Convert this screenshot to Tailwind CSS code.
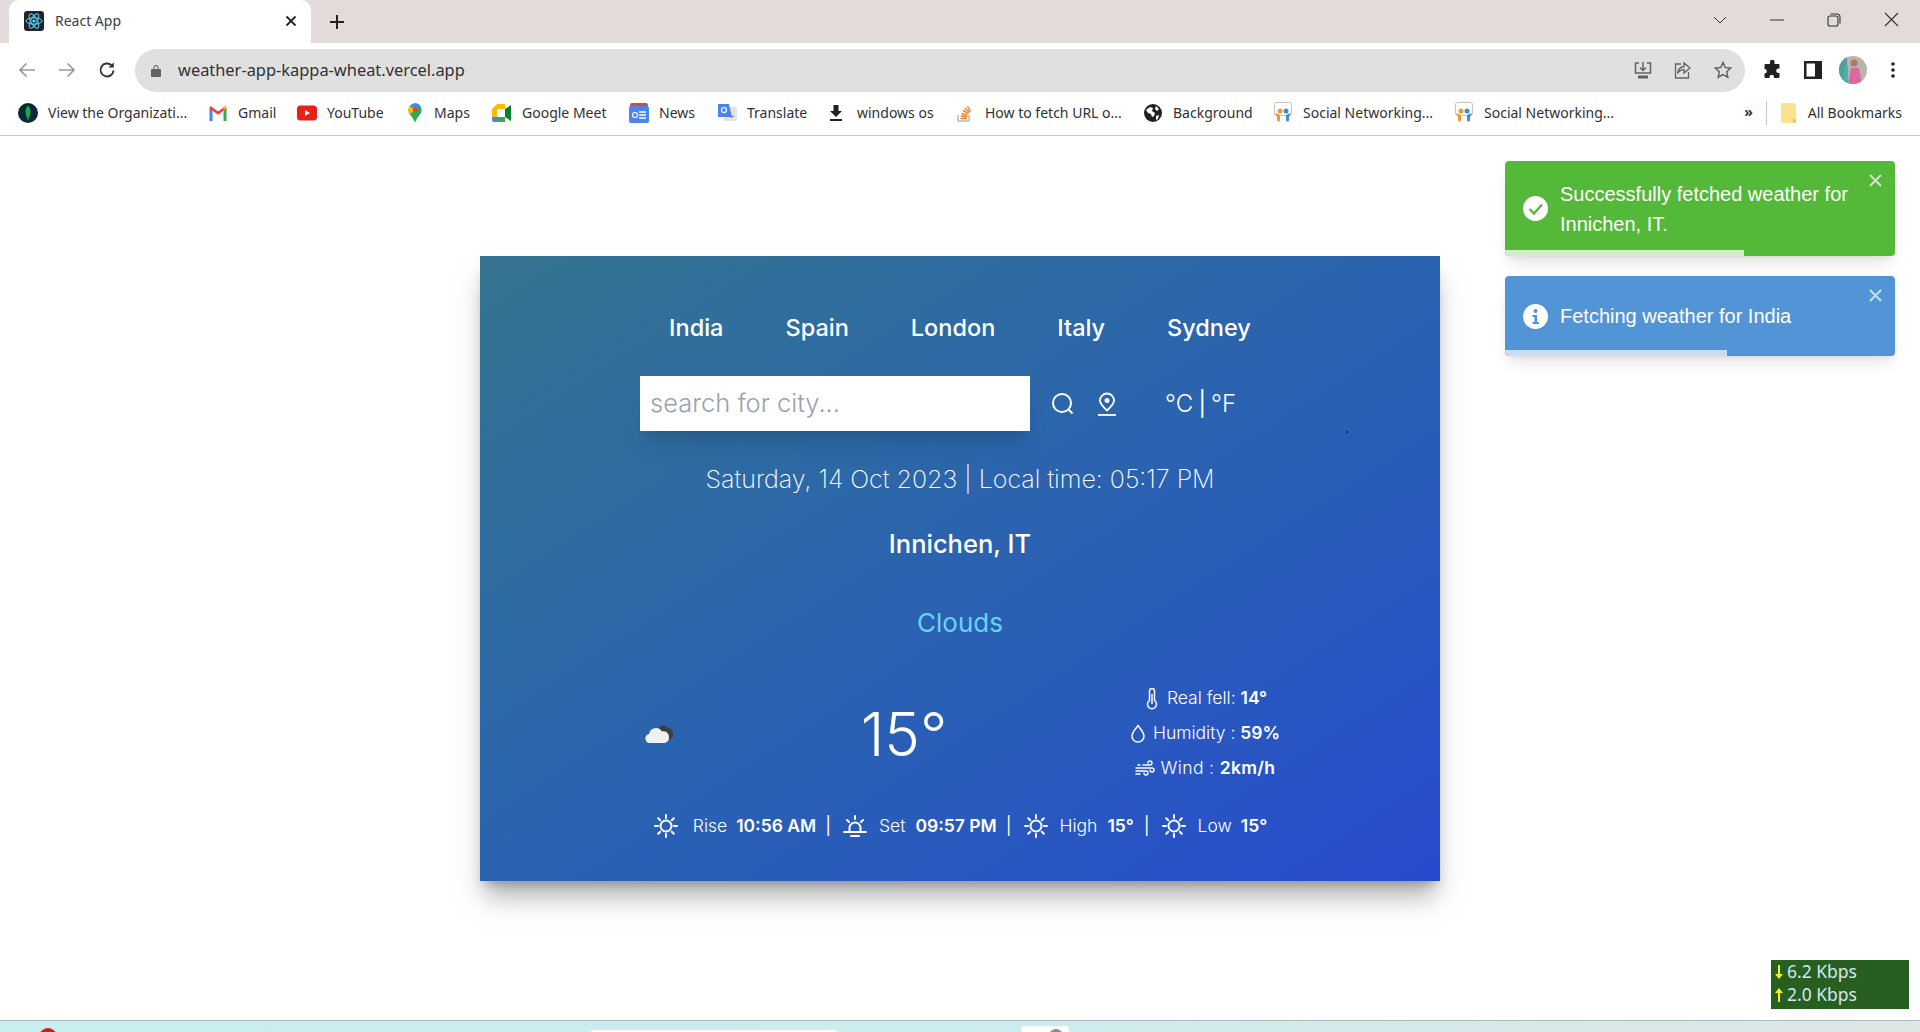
<!DOCTYPE html>
<html>

<head>
    <title>React App</title>
    <script src="https://cdn.jsdelivr.net/npm/@tailwindcss/browser@4"></script>
</head>

<body class="bg-white">
    <div class="h-screen overflow-hidden flex flex-col relative font-['Noto_Sans',sans-serif] text-[#3c4043]">

        <!-- Tab strip -->
        <div class="h-[43px] shrink-0 bg-[#e3dbd9] flex items-end">
            <div class="ml-[9px] w-[302px] h-[43px] bg-white rounded-t-[10px] flex items-center pl-[15px] pr-[14px] pb-[2px]">
                <svg class="w-[20px] h-[20px] shrink-0" viewBox="0 0 20 20">
                    <rect width="20" height="20" rx="3" fill="#20232a" />
                    <g fill="none" stroke="#61dafb" stroke-width="1">
                        <ellipse cx="10" cy="10" rx="8" ry="3.2" />
                        <ellipse cx="10" cy="10" rx="8" ry="3.2" transform="rotate(60 10 10)" />
                        <ellipse cx="10" cy="10" rx="8" ry="3.2" transform="rotate(120 10 10)" />
                    </g>
                    <circle cx="10" cy="10" r="1.6" fill="#61dafb" />
                </svg>
                <span class="ml-[11px] text-[14px] flex-1">React App</span>
                <svg class="w-[12px] h-[12px]" viewBox="0 0 12 12" fill="none" stroke="#222" stroke-width="1.8">
                    <path d="M1.5 1.5l9 9M10.5 1.5l-9 9" />
                </svg>
            </div>
            <svg class="w-[16px] h-[16px] ml-[18px] mb-[13px]" viewBox="0 0 16 16" fill="none" stroke="#222" stroke-width="2">
                <path d="M8 1v14M1 8h14" />
            </svg>
            <div class="ml-auto h-[43px] flex items-center text-[#333]">
                <svg class="w-[14px] h-[8px] mb-[4px]" viewBox="0 0 14 8" fill="none" stroke="currentColor" stroke-width="1">
                    <path d="M1 1l6 6 6-6" />
                </svg>
                <svg class="w-[14px] h-[2px] ml-[43px] mb-[4px]" viewBox="0 0 14 2">
                    <path d="M0 1h14" stroke="currentColor" stroke-width="1" />
                </svg>
                <svg class="w-[14px] h-[14px] ml-[43px] mb-[4px]" viewBox="0 0 14 14" fill="none" stroke="currentColor" stroke-width="1.1">
                    <rect x="1" y="3" width="10" height="10" rx="2" />
                    <path d="M3.5 1h6.5a3 3 0 0 1 3 3v6.500" />
                </svg>
                <svg class="w-[15px] h-[15px] ml-[43px] mr-[21px] mb-[4px]" viewBox="0 0 15 15" fill="none" stroke="currentColor" stroke-width="1.1">
                    <path d="M1 1l13 13M14 1L1 14" />
                </svg>
            </div>
        </div>

        <!-- Toolbar -->
        <div class="h-[54px] shrink-0 flex items-center">
            <svg class="w-[18px] h-[16px] ml-[18px]" viewBox="0 0 18 16" fill="none" stroke="#9a9a9a" stroke-width="1.7">
                <path d="M17 8H2M8.5 1.5L2 8l6.500 6.500" />
            </svg>
            <svg class="w-[18px] h-[16px] ml-[22px]" viewBox="0 0 18 16" fill="none" stroke="#9a9a9a" stroke-width="1.7">
                <path d="M1 8h15M9.500 1.500L16 8l-6.500 6.500" />
            </svg>
            <svg class="w-[18px] h-[18px] ml-[22px]" viewBox="0 0 18 18" fill="none" stroke="#333" stroke-width="1.900">
                <path d="M15.500 9.500a6.500 6.500 0 1 1-1.900-5.100" />
                <path d="M15.800 1.200v5.300h-5.300z" fill="#333" stroke="none" />
            </svg>
            <div class="ml-[19px] w-[1610px] h-[43px] bg-[#e0e0e0] rounded-full flex items-center pl-[16px] pr-[12px]">
                <svg class="w-[10px] h-[13px]" viewBox="0 0 10 13" fill="#5f6368">
                    <path d="M2.500 5V3.500a2.500 2.500 0 0 1 5 0V5H9a1 1 0 0 1 1 1v6a1 1 0 0 1-1 1H1a1 1 0 0 1-1-1V6a1 1 0 0 1 1-1zm1 0h3V3.500a1.500 1.500 0 0 0-3 0z" />
                </svg>
                <span class="ml-[17px] text-[16.4px] text-[#303134] flex-1">weather-app-kappa-wheat.vercel.app</span>
                <svg class="w-[20px] h-[20px]" viewBox="0 0 20 20" fill="none" stroke="#5f6368" stroke-width="1.500">
                    <path d="M6 3H2.500v10h15V3H14M10 2v8M7 7.500l3 3 3-3" />
                    <path d="M5 17h10" stroke-width="3" />
                </svg>
                <svg class="w-[20px] h-[20px] ml-[20px]" viewBox="0 0 20 20" fill="none" stroke="#5f6368" stroke-width="1.300">
                    <path d="M8 4H2.500v14h13v-6M11 3v3.500c-4 .5-6 3-6.500 7 2-3 4-3.800 6.500-3.800V13l6-5z" />
                </svg>
                <svg class="w-[20px] h-[20px] ml-[20px]" viewBox="0 0 20 20" fill="none" stroke="#5f6368" stroke-width="1.500">
                    <path d="M10 2.500l2.300 5 5.400.6-4 3.700 1.100 5.400L10 14.500l-4.800 2.700 1.100-5.400-4-3.700 5.400-.6z" />
                </svg>
            </div>
            <svg class="w-[20px] h-[20px] ml-[17px]" viewBox="0 0 20 20" fill="#202124">
                <path d="M8 1.500a2.300 2.300 0 0 1 4.500 0V4h4a1 1 0 0 1 1 1v3.500h-1.500a2.300 2.300 0 0 0 0 4.500h1.500v4a1 1 0 0 1-1 1H12v-1.500a2.300 2.300 0 0 0-4.500 0V18H3.500a1 1 0 0 1-1-1v-3.500H3a2.300 2.300 0 0 0 0-4.500h-.5V5a1 1 0 0 1 1-1H8z" />
            </svg>
            <svg class="w-[18px] h-[18px] ml-[22px]" viewBox="0 0 18 18" fill="none">
                <rect x="1.250" y="1.250" width="15.500" height="15.500" stroke="#202124" stroke-width="2.500" />
                <rect x="11" y="1" width="6" height="16" fill="#202124" />
            </svg>
            <svg class="w-[28px] h-[28px] ml-[17px]" viewBox="0 0 28 28">
                <defs>
                    <clipPath id="avatar"><circle cx="14" cy="14" r="14" /></clipPath>
                </defs>
                <g clip-path="url(#avatar)">
                    <rect width="28" height="28" fill="#bdb3ad" />
                    <rect x="0" width="8" height="28" fill="#5a9a98" />
                    <path d="M9 28l3-16h8l3 16z" fill="#d96aa0" />
                    <circle cx="15" cy="7" r="3.500" fill="#a87b68" />
                    <rect x="5" y="10" width="4" height="18" fill="#3bb8b0" />
                </g>
            </svg>
            <svg class="w-[4px] h-[16px] ml-[24px]" viewBox="0 0 4 16" fill="#202124">
                <circle cx="2" cy="2" r="1.800" />
                <circle cx="2" cy="8" r="1.800" />
                <circle cx="2" cy="14" r="1.800" />
            </svg>
        </div>

        <!-- Bookmarks bar -->
        <div class="h-[39px] shrink-0 border-b border-[#c8c8c8] flex items-center pl-[18px] pr-[18px] pb-[7px] text-[14px] text-[#303134]">
            <div class="flex items-center gap-[10px] w-[190px]">
                <svg class="w-[20px] h-[20px] shrink-0" viewBox="0 0 20 20">
                    <circle cx="10" cy="10" r="10" fill="#0b2a33" />
                    <path d="M10 2.500c3 3 3.500 7.500 0 15-3.500-7.500-3-12 0-15z" fill="#13aa52" />
                </svg>
                <span>View the Organizati...</span>
            </div>
            <div class="flex items-center gap-[10px] w-[89px]">
                <svg class="w-[20px] h-[16px] shrink-0" viewBox="0 0 20 16">
                    <path d="M1.500 16V3l3 2v11z" fill="#4285f4" />
                    <path d="M15.500 16V5l3-2v13z" fill="#34a853" />
                    <path d="M1.500 3.500l8.500 6.300 8.500-6.300-1-2.500-7.500 5.500L2.500 1z" fill="#ea4335" />
                    <path d="M15.500 5.500l3-2.500-1-2-2 1.500z" fill="#fbbc04" />
                </svg>
                <span>Gmail</span>
            </div>
            <div class="flex items-center gap-[10px] w-[109px]">
                <svg class="w-[20px] h-[16px] shrink-0" viewBox="0 0 20 16">
                    <rect width="20" height="15" y="0.500" rx="3.500" fill="#e62117" />
                    <path d="M8 5l5 3-5 3z" fill="#fff" />
                </svg>
                <span>YouTube</span>
            </div>
            <div class="flex items-center gap-[11px] w-[86px]">
                <svg class="w-[16px] h-[20px] shrink-0 ml-[1px]" viewBox="0 0 18 22">
                    <path d="M9 0a7.500 7.500 0 0 1 7.500 7.500c0 5-5 7-7.500 14.500C6.500 14.500 1.500 12.500 1.500 7.500A7.500 7.500 0 0 1 9 0z" fill="#34a853" />
                    <path d="M3.500 3L9 0a7.500 7.500 0 0 1 5.500 2.500L9 7.500z" fill="#4285f4" />
                    <path d="M1.500 7.500A7.500 7.500 0 0 1 3.500 3L9 7.500 4 12c-1.500-1.500-2.500-3-2.500-4.500z" fill="#fbbc04" />
                    <circle cx="9" cy="7.500" r="2.700" fill="#ea4335" />
                </svg>
                <span>Maps</span>
            </div>
            <div class="flex items-center gap-[10px] w-[137px]">
                <svg class="w-[20px] h-[18px] shrink-0" viewBox="0 0 20 18">
                    <path d="M0 5l5-5h8v5H5v8H0z" fill="#fbbc04" />
                    <path d="M0 13h5v5H2a2 2 0 0 1-2-2z" fill="#4285f4" />
                    <path d="M5 13h8v5H5z" fill="#34a853" />
                    <path d="M13 5v8l6 4V1z" fill="#00832d" />
                    <path d="M5 5h8v8H5z" fill="#fff" />
                </svg>
                <span>Google Meet</span>
            </div>
            <div class="flex items-center gap-[10px] w-[88px]">
                <svg class="w-[20px] h-[20px] shrink-0" viewBox="0 0 20 20">
                    <rect x="1" y="0" width="18" height="6" rx="2" fill="#c5533a" />
                    <rect y="3" width="20" height="17" rx="2" fill="#4c84ee" />
                    <path d="M10 9h7M10 12h7M10 15h7" stroke="#fff" stroke-width="1.500" />
                    <circle cx="6" cy="12" r="2.500" fill="none" stroke="#fff" stroke-width="1.200" />
                </svg>
                <span>News</span>
            </div>
            <div class="flex items-center gap-[10px] w-[110px]">
                <svg class="w-[20px] h-[20px] shrink-0" viewBox="0 0 20 20">
                    <rect x="7" y="4" width="13" height="14" rx="1" fill="#e3e3e3" />
                    <path d="M1 1h11l3 13H1z" fill="#4c84ee" />
                    <path d="M12 10l2 4 3-1" fill="none" stroke="#777" stroke-width="1.200" />
                    <circle cx="7" cy="7" r="2.500" fill="none" stroke="#fff" stroke-width="1.200" />
                </svg>
                <span>Translate</span>
            </div>
            <div class="flex items-center gap-[12px] w-[128px]">
                <svg class="w-[18px] h-[18px] shrink-0" viewBox="0 0 18 18" fill="#202124">
                    <path d="M6.500 1h5v6H15l-6 6-6-6h3.500z" />
                    <rect x="3" y="15" width="12" height="2" />
                </svg>
                <span>windows os</span>
            </div>
            <div class="flex items-center gap-[10px] w-[188px]">
                <svg class="w-[20px] h-[20px] shrink-0" viewBox="0 0 20 20" fill="none" stroke="#f48024" stroke-width="1.500">
                    <path d="M3 12v6h11v-6" stroke="#bcbbbb" />
                    <path d="M5.500 15.500h6.500M5.800 13l6.400.8M6.500 10.500l6 1.700M8 7.500l5.500 3.200M10 5l4.500 4.500M12.500 3l3 5.500" />
                </svg>
                <span>How to fetch URL o...</span>
            </div>
            <div class="flex items-center gap-[10px] w-[130px]">
                <svg class="w-[20px] h-[20px] shrink-0" viewBox="0 0 20 20">
                    <circle cx="10" cy="10" r="9" fill="#202124" />
                    <path d="M3 7l4-3 3 1-1 3 3 2-1 3-2 1-1-3-3-1zM13 3l3 3-2 2-2-2zM13 13l3-1-1 4-2 1z" fill="#fff" />
                </svg>
                <span>Background</span>
            </div>
            <div class="flex items-center gap-[10px] w-[181px]">
                <svg class="w-[20px] h-[22px] shrink-0" viewBox="0 0 20 22">
                    <rect x="1.500" y="0.500" width="17" height="13" rx="2" fill="#fff" stroke="#c9c3b8" />
                    <circle cx="7" cy="9" r="2.500" fill="#f29a2e" />
                    <circle cx="13" cy="9" r="2.500" fill="#3d8fd1" />
                    <path d="M2 11l5 2v5a1.500 1.500 0 0 1-3 0v-3z" fill="#f29a2e" />
                    <path d="M18 11l-5 2v5a1.500 1.500 0 0 0 3 0v-3z" fill="#3d8fd1" />
                </svg>
                <span>Social Networking...</span>
            </div>
            <div class="flex items-center gap-[10px]">
                <svg class="w-[20px] h-[22px] shrink-0" viewBox="0 0 20 22">
                    <rect x="1.500" y="0.500" width="17" height="13" rx="2" fill="#fff" stroke="#c9c3b8" />
                    <circle cx="7" cy="9" r="2.500" fill="#f29a2e" />
                    <circle cx="13" cy="9" r="2.500" fill="#3d8fd1" />
                    <path d="M2 11l5 2v5a1.500 1.500 0 0 1-3 0v-3z" fill="#f29a2e" />
                    <path d="M18 11l-5 2v5a1.500 1.500 0 0 0 3 0v-3z" fill="#3d8fd1" />
                </svg>
                <span>Social Networking...</span>
            </div>
            <div class="ml-auto flex items-center">
                <span class="font-bold text-[14px] mb-[2px]">»</span>
                <div class="w-px h-[24px] bg-[#c8c8c8] ml-[13px]"></div>
                <svg class="w-[16px] h-[20px] ml-[14px]" viewBox="0 0 16 20">
                    <path d="M1 0h11a3 3 0 0 1 3 3v15a2 2 0 0 1-2 2H2a2 2 0 0 1-2-2V1a1 1 0 0 1 1-1z" fill="#fbe38e" />
                    <path d="M12 20v-4h3v2a2 2 0 0 1-2 2z" fill="#e9c85e" />
                </svg>
                <span class="ml-[11px]">All Bookmarks</span>
            </div>
        </div>

        <!-- Page -->
        <main class="flex-1 min-h-0 pt-[120px]">
            <div class="relative mx-auto w-[960px] h-[625px] px-[160px] pt-[57px] bg-linear-to-br from-[#36748f] to-[#2a49cf] shadow-[0_20px_25px_-5px_rgba(100,100,100,0.5),0_8px_10px_-6px_rgba(100,100,100,0.5)] text-white font-['Inter',sans-serif]">
                <div class="flex justify-center gap-[62px] text-[23.5px] leading-[30px] font-medium">
                    <button>India</button>
                    <button>Spain</button>
                    <button>London</button>
                    <button>Italy</button>
                    <button>Sydney</button>
                </div>

                <div class="mt-[33px] flex items-center">
                    <input class="w-[390px] h-[55px] px-[10px] pb-[2px] bg-white text-[25.5px] font-light text-black placeholder:text-gray-400 shadow-xl focus:outline-none" type="text" placeholder="search for city...">
                    <svg class="w-[25px] h-[25px] ml-[20px]" viewBox="0 0 25 25" fill="none" stroke="#fff" stroke-width="2">
                        <circle cx="12" cy="12" r="9" />
                        <path d="M18.500 18.500l4 4" />
                    </svg>
                    <svg class="w-[20px] h-[24px] ml-[22px]" viewBox="0 0 20 24" fill="none" stroke="#fff" stroke-width="1.800">
                        <path d="M10 1.500a7 7 0 0 1 7 7c0 3.500-3.500 6.500-7 10-3.500-3.500-7-6.500-7-10a7 7 0 0 1 7-7z" />
                        <circle cx="10" cy="8.500" r="1.600" fill="#fff" />
                        <path d="M1 23h18" />
                    </svg>
                    <div class="ml-[48px] flex items-center text-[24px] font-light gap-[5px]">
                        <span>°C</span>
                        <span class="font-normal">|</span>
                        <span>°F</span>
                    </div>
                </div>

                <p class="mt-[30px] text-center text-[25px] leading-[36px] font-[250] text-white whitespace-nowrap -mx-[20px]">Saturday, 14 Oct 2023 | Local time: 05:17 PM</p>
                <p class="mt-[29px] text-center text-[25.5px] leading-[36px] font-medium">Innichen, IT</p>
                <p class="mt-[43px] text-center text-[26px] leading-[36px] text-[#67d4f5]">Clouds</p>

                <div class="mt-[40px] h-[105px] flex items-center">
                    <div class="w-[160px] pl-[5px]">
                        <svg class="w-[30px] h-[24px]" viewBox="0 0 30 24">
                            <path d="M14 5a6 6 0 0 1 9 1 5 5 0 0 1 5 6 4 4 0 0 1-3 5H14z" fill="#3c3f45" />
                            <path d="M5 21a4.500 4.500 0 0 1-1-8.900A7 7 0 0 1 17 9.500a5.500 5.500 0 0 1 7 5.500c0 3.500-2 6-5 6z" fill="#f1f1f1" />
                        </svg>
                    </div>
                    <div class="w-[208px] text-center text-[60px] leading-none font-light">15°</div>
                    <div class="ml-auto w-[150px] flex flex-col items-center text-[17.5px] font-light whitespace-nowrap">
                        <div class="h-[35px] flex items-center gap-[8px] ml-[2px]">
                            <svg class="w-[14px] h-[22px]" viewBox="0 0 14 22" fill="none" stroke="#fff" stroke-width="1.500">
                                <path d="M4.500 3a2.500 2.500 0 0 1 5 0v9.500a4.500 4.500 0 1 1-5 0z" />
                                <path d="M7 6v10" />
                            </svg>
                            <span>Real fell: <b class="font-semibold">14°</b></span>
                        </div>
                        <div class="h-[35px] flex items-center gap-[7px]">
                            <svg class="w-[16px] h-[20px] shrink-0" viewBox="0 0 16 20" fill="none" stroke="#fff" stroke-width="1.500">
                                <path d="M8 1.500c3 4 6 7 6 10.500a6 6 0 0 1-12 0c0-3.500 3-6.500 6-10.500z" />
                            </svg>
                            <span>Humidity : <b class="font-semibold">59%</b></span>
                        </div>
                        <div class="h-[35px] flex items-center gap-[6px]">
                            <svg class="w-[20px] h-[18px] shrink-0" viewBox="0 0 20 18" fill="none" stroke="#fff" stroke-width="1.400" stroke-linecap="round">
                                <path d="M8 5h7a2 2 0 1 0-2-2M1 8h16a2 2 0 1 1-2 2M3 5h2M1 11h10a2 2 0 1 1-2 2M1 14h4" />
                            </svg>
                            <span class="tracking-[0.02em]">Wind : <b class="font-semibold">2km/h</b></span>
                        </div>
                    </div>
                </div>

                <div class="mt-[25px] h-[30px] -mx-[40px] flex items-center justify-center text-[17.5px] font-light whitespace-nowrap">
                    <svg class="w-[26px] h-[26px]" viewBox="0 0 26 26" fill="none" stroke="#fff" stroke-width="2" stroke-linecap="round">
                        <circle cx="13" cy="13" r="5.500" />
                        <path d="M13 2v3M13 21v3M2 13h3M21 13h3M5.200 5.200l2 2M18.800 18.800l2 2M5.200 20.800l2-2M18.800 7.200l2-2" />
                    </svg>
                    <span class="ml-[14px]">Rise</span>
                    <b class="ml-[9px] font-semibold">10:56 AM</b>
                    <span class="ml-[9px] font-normal">|</span>
                    <svg class="w-[26px] h-[26px] ml-[11px]" viewBox="0 0 26 26" fill="none" stroke="#fff" stroke-width="2" stroke-linecap="round">
                        <path d="M7.500 19v-4a5.500 5.500 0 0 1 11 0v4M2 19h22M13 3v3M5 7l2 2M21 7l-2 2M9 23h8" />
                    </svg>
                    <span class="ml-[11px]">Set</span>
                    <b class="ml-[10px] font-semibold">09:57 PM</b>
                    <span class="ml-[9px] font-normal">|</span>
                    <svg class="w-[26px] h-[26px] ml-[11px]" viewBox="0 0 26 26" fill="none" stroke="#fff" stroke-width="2" stroke-linecap="round">
                        <circle cx="13" cy="13" r="5.500" />
                        <path d="M13 2v3M13 21v3M2 13h3M21 13h3M5.200 5.200l2 2M18.800 18.800l2 2M5.200 20.800l2-2M18.800 7.200l2-2" />
                    </svg>
                    <span class="ml-[11px]">High</span>
                    <b class="ml-[10px] font-semibold">15°</b>
                    <span class="ml-[10px] font-normal">|</span>
                    <svg class="w-[26px] h-[26px] ml-[11px]" viewBox="0 0 26 26" fill="none" stroke="#fff" stroke-width="2" stroke-linecap="round">
                        <circle cx="13" cy="13" r="5.500" />
                        <path d="M13 2v3M13 21v3M2 13h3M21 13h3M5.200 5.200l2 2M18.800 18.800l2 2M5.200 20.800l2-2M18.800 7.200l2-2" />
                    </svg>
                    <span class="ml-[11px]">Low</span>
                    <b class="ml-[9px] font-semibold">15°</b>
                </div>

                <!-- cursor speck -->
                <div class="absolute left-[866px] top-[175px] w-[2px] h-[2px] bg-[#1c2a4a]"></div>
            </div>
        </main>

        <!-- Taskbar edge -->
        <div class="h-[12px] shrink-0 border-t border-[#a9bcbf] bg-linear-to-r from-[#c8eef0] via-[#cdecee] to-[#dfe6e6] overflow-hidden flex">
            <div class="ml-[39px] mt-[7px] w-[18px] h-[18px] rounded-full bg-[#c8201c]"></div>
            <div class="ml-[533px] mt-[9px] w-[248px] h-[4px] bg-white rounded-t"></div>
            <div class="ml-[183px] mt-[5px] w-[48px] h-[12px] bg-white rounded-t flex justify-end pr-[6px]">
                <div class="mt-[3px] w-[14px] h-[14px] rounded-full bg-[#8a8a8a]"></div>
            </div>
        </div>

        <!-- Toasts -->
        <div class="absolute top-[161px] left-[1505px] w-[390px] flex flex-col gap-[20px] font-['Liberation_Sans',sans-serif] text-white">
            <div class="relative h-[95px] bg-[#54b838] rounded-[4px] shadow-lg flex items-center pl-[18px] pr-[40px] overflow-hidden">
                <svg class="w-[25px] h-[25px] shrink-0" viewBox="0 0 25 25">
                    <circle cx="12.500" cy="12.500" r="12.500" fill="#fff" />
                    <path d="M6.500 13l4.500 4.500 8-9" fill="none" stroke="#54b838" stroke-width="2.400" />
                </svg>
                <p class="ml-[12px] text-[20px] leading-[30px]">Successfully fetched weather for Innichen, IT.</p>
                <svg class="absolute top-[13px] right-[13px] w-[13px] h-[13px] opacity-70" viewBox="0 0 13 13" fill="none" stroke="#fff" stroke-width="2">
                    <path d="M1 1l11 11M12 1L1 12" />
                </svg>
                <div class="absolute left-0 bottom-0 w-[239px] h-[6px] bg-[#d2ebc9]"></div>
            </div>
            <div class="relative h-[80px] bg-[#5295d6] rounded-[4px] shadow-lg flex items-center pl-[18px] pr-[40px] overflow-hidden">
                <svg class="w-[25px] h-[25px] shrink-0" viewBox="0 0 25 25">
                    <circle cx="12.500" cy="12.500" r="12.500" fill="#fff" />
                    <circle cx="12.500" cy="7" r="2" fill="#5295d6" />
                    <path d="M9.500 11h4.500v7h2v2H9.500v-2h2v-5h-2z" fill="#5295d6" />
                </svg>
                <p class="ml-[12px] text-[20px] leading-[30px]">Fetching weather for India</p>
                <svg class="absolute top-[13px] right-[13px] w-[13px] h-[13px] opacity-70" viewBox="0 0 13 13" fill="none" stroke="#fff" stroke-width="2">
                    <path d="M1 1l11 11M12 1L1 12" />
                </svg>
                <div class="absolute left-0 bottom-0 w-[222px] h-[6px] bg-[#c8ddf2]"></div>
            </div>
        </div>

        <!-- Net speed meter -->
        <div class="absolute top-[960px] left-[1771px] w-[138px] h-[49px] bg-[#275f20] text-[#d5e8ee] text-[17.5px] leading-[23px] pl-[4px] font-['Noto_Sans',sans-serif]">
            <div class="flex items-center gap-[4px]">
                <svg class="w-[8px] h-[14px]" viewBox="0 0 8 14" fill="#f4f41c"><path d="M3 0h2v9h3l-4 5-4-5h3z" /></svg>
                <span>6.2 Kbps</span>
            </div>
            <div class="flex items-center gap-[4px]">
                <svg class="w-[8px] h-[14px]" viewBox="0 0 8 14" fill="#f4f41c"><path d="M3 14h2V5h3L4 0 0 5h3z" /></svg>
                <span>2.0 Kbps</span>
            </div>
        </div>
    </div>
</body>

</html>
